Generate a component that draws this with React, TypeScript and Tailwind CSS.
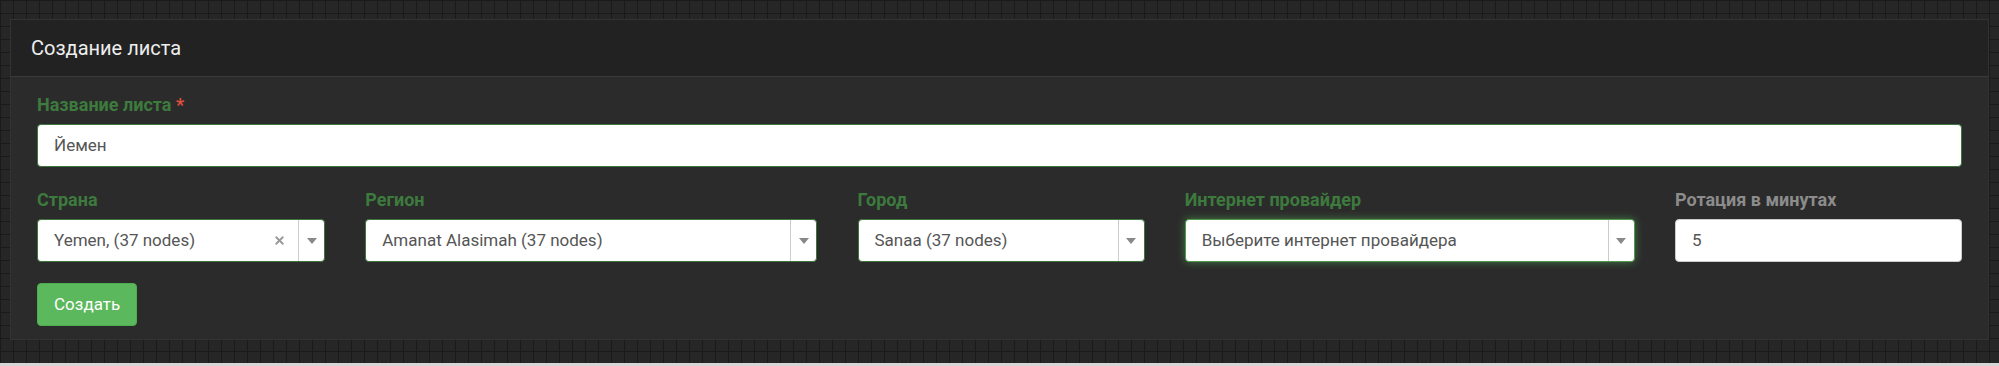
import { X } from 'lucide-react';

const Caret = () => (
  <svg width="10" height="6" viewBox="0 0 10 6" className="fill-[#888]">
    <path d="M0 0h10L5 6z" />
  </svg>
);

type SelectProps = { value: string; clearable?: boolean; focused?: boolean };

const FakeSelect = ({ value, clearable, focused }: SelectProps) => (
  <div
    className={`flex h-[43px] items-center rounded-[4px] border bg-white ${
      focused ? 'border-[#4e9a4e] shadow-[0_0_8px_rgba(92,184,92,0.55)]' : 'border-[#3c763d]'
    }`}
  >
    <span className="flex-1 truncate pl-[16px] text-[17px] text-[#555]">{value}</span>
    {clearable && <X className="mr-[12px] h-[13px] w-[13px] text-[#999]" strokeWidth={3.5} />}
    <div className="flex h-full w-[26px] items-center justify-center border-l border-[#ccc]">
      <Caret />
    </div>
  </div>
);

const Label = ({ children, muted }: { children: React.ReactNode; muted?: boolean }) => (
  <label
    className={`mb-[9px] block text-[18px] font-bold leading-[21px] ${muted ? 'text-[#8c8c8c]' : 'text-[#3d7a3d]'}`}
  >
    {children}
  </label>
);

export default function App() {
  return (
    <div
      className="flex h-[366px] w-full flex-col bg-[#262626] bg-[linear-gradient(to_right,#1a1a1a_1px,transparent_1px),linear-gradient(to_bottom,#1a1a1a_1px,transparent_1px)] bg-[size:13px_13px] font-['Roboto',sans-serif]"
    >
      <div className="mx-[10px] mt-[19px] flex-1">
        <div className="border border-[#333] bg-[#2b2b2b]">
          {/* header */}
          <div className="flex h-[57px] items-center border-b border-[#3a3a3a] bg-[#222] px-[20px]">
            <h3 className="text-[20px] text-[#eee]">Создание листа</h3>
          </div>

          {/* body */}
          <div className="px-[26px] pb-[13px] pt-[17px]">
            <Label>
              Название листа <span className="text-[#e0503c]">*</span>
            </Label>
            <div className="flex h-[43px] items-center rounded-[4px] border border-[#3c763d] bg-white pl-[16px] text-[17px] text-[#555]">
              Йемен
            </div>

            <div className="mt-[22px] flex justify-between">
              <div className="w-[288px]">
                <Label>Страна</Label>
                <FakeSelect value="Yemen, (37 nodes)" clearable />
              </div>
              <div className="w-[452px]">
                <Label>Регион</Label>
                <FakeSelect value="Amanat Alasimah (37 nodes)" />
              </div>
              <div className="w-[287px]">
                <Label>Город</Label>
                <FakeSelect value="Sanaa (37 nodes)" />
              </div>
              <div className="w-[450px]">
                <Label>Интернет провайдер</Label>
                <FakeSelect value="Выберите интернет провайдера" focused />
              </div>
              <div className="w-[287px]">
                <Label muted>Ротация в минутах</Label>
                <div className="flex h-[43px] items-center rounded-[4px] border border-[#ccc] bg-white pl-[16px] text-[17px] text-[#555]">
                  5
                </div>
              </div>
            </div>

            <button className="mt-[21px] h-[43px] rounded-[4px] border border-[#4cae4c] bg-[#5cb85c] px-[16px] text-[17px] text-white">
              Создать
            </button>
          </div>
        </div>
      </div>
      <div className="h-[3px] bg-[#d6d6d6]" />
    </div>
  );
}
